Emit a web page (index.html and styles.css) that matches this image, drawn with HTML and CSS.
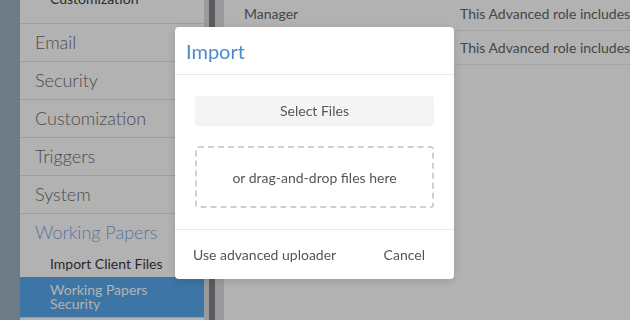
FILE: index.html
```html
<!DOCTYPE html>
<html>
<head>
    <title>Settings</title>
    <link rel="stylesheet" href="styles.css">
</head>
<body>
    <div class="app">
        <div class="rail"></div>
        <nav class="sidebar">
            <ul class="sub-menu first">
                <li>Customization</li>
            </ul>
            <div class="nav-item">Email</div>
            <div class="nav-item">Security</div>
            <div class="nav-item">Customization</div>
            <div class="nav-item">Triggers</div>
            <div class="nav-item">System</div>
            <div class="nav-item open">Working Papers</div>
            <ul class="sub-menu">
                <li>Import Client Files</li>
                <li class="active">Working Papers<br>Security</li>
            </ul>
        </nav>
        <div class="gutter">
            <span class="edge"></span>
            <span class="thumb"></span>
            <span class="track"></span>
        </div>
        <main class="content">
            <div class="role-row">
                <span class="role-name">Manager</span>
                <span class="role-desc">This Advanced role includes all permissions</span>
            </div>
            <div class="role-row">
                <span class="role-name"></span>
                <span class="role-desc">This Advanced role includes all permissions</span>
            </div>
        </main>
    </div>

    <div class="backdrop">
        <div class="modal">
            <div class="modal-header">Import</div>
            <div class="modal-body">
                <button class="select-btn">Select Files</button>
                <div class="dropzone">or drag-and-drop files here</div>
            </div>
            <div class="modal-footer">
                <button class="link-btn">Use advanced uploader</button>
                <button class="link-btn cancel">Cancel</button>
            </div>
        </div>
    </div>
</body>
</html>
```

FILE: styles.css
```css
* {
    margin: 0;
    padding: 0;
    box-sizing: border-box;
    font-family: 'Lato', 'Open Sans', sans-serif;
}

body {
    width: 630px;
    height: 320px;
    overflow: hidden;
    background: #fff;
}

.app {
    display: flex;
    height: 320px;
}

.rail {
    width: 20px;
    background: #9db1c2;
}

.sidebar {
    width: 184px;
    background: #fff;
    margin-top: -14px;
}

.nav-item {
    height: 38px;
    padding-left: 15px;
    padding-bottom: 2px;
    display: flex;
    align-items: center;
    font-size: 18px;
    font-weight: 300;
    color: #6e6e6e;
    border-top: 1px solid #e3e3e3;
}

.nav-item.open {
    color: #7ea6e0;
}

.sub-menu {
    list-style: none;
}

.sub-menu.first {
    padding-bottom: 11px;
}

.sub-menu li {
    padding: 6px 0 6px 30px;
    font-size: 14px;
    line-height: 14px;
    color: #3c3c3c;
}

.sub-menu li.active {
    background: #56a8ee;
    color: #fff;
    border-bottom: 1px solid #dedede;
}

.gutter {
    display: flex;
}

.gutter .edge {
    width: 5px;
    background: #dcdee1;
}

.gutter .thumb {
    width: 6px;
    background: #858585;
}

.gutter .track {
    width: 9px;
    background: #dcdfe3;
}

.content {
    flex: 1;
    margin-top: -3px;
    overflow: hidden;
}

.role-row {
    display: flex;
    height: 34px;
    align-items: center;
    border-bottom: 1px solid #ececec;
    font-size: 14px;
    color: #666;
    white-space: nowrap;
}

.role-name {
    width: 236px;
    padding-left: 20px;
    flex-shrink: 0;
}

.backdrop {
    position: fixed;
    inset: 0;
    background: rgba(0, 0, 0, 0.3);
}

.modal {
    width: 279px;
    margin: 27px 0 0 175px;
    background: #fff;
    border-radius: 4px;
    box-shadow: 0 2px 10px rgba(0, 0, 0, 0.15);
}

.modal-header {
    height: 48px;
    padding-left: 11px;
    display: flex;
    align-items: center;
    font-size: 20px;
    color: #4a8ccb;
    border-bottom: 1px solid #e8e8e8;
}

.modal-body {
    padding: 21px 20px 21px;
}

.select-btn {
    display: block;
    width: 100%;
    height: 30px;
    padding-bottom: 2px;
    border: none;
    border-radius: 3px;
    background: #f4f4f4;
    font-size: 14px;
    color: #555;
    margin-bottom: 20px;
}

.dropzone {
    height: 62px;
    border: 2px dashed #d0d0d0;
    border-radius: 3px;
    display: flex;
    align-items: center;
    justify-content: center;
    font-size: 14px;
    color: #555;
}

.modal-footer {
    height: 50px;
    display: flex;
    align-items: center;
    justify-content: space-between;
    padding: 0 29px 0 18px;
    border-top: 1px solid #e8e8e8;
}

.link-btn {
    border: none;
    background: none;
    font-size: 14px;
    color: #555;
}
```
